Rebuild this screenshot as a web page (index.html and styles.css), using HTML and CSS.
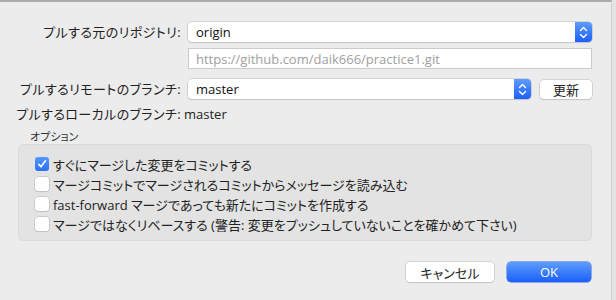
FILE: index.html
```html
<!DOCTYPE html>
<html lang="ja">
<head>
    <meta charset="UTF-8">
    <title>プル</title>
    <link rel="stylesheet" href="styles.css">
</head>
<body>

<div class="sheet">
    <div class="form">
        <label class="form-label">プルする元のリポジトリ:</label>
        <div class="popup">
            <span class="popup-text">origin</span>
            <span class="stepper">
                <svg width="9" height="13" viewBox="0 0 9 13"><path d="M1.5 4.5 L4.5 1.5 L7.5 4.5 M1.5 8.5 L4.5 11.5 L7.5 8.5" fill="none" stroke="#fff" stroke-width="1.4" stroke-linecap="round" stroke-linejoin="round"/></svg>
            </span>
        </div>

        <span></span>
        <input class="text-field" type="text" placeholder="https://github.com/daik666/practice1.git">

        <label class="form-label row-gap">プルするリモートのブランチ:</label>
        <div class="control-row row-gap">
            <div class="popup popup-flex">
                <span class="popup-text">master</span>
                <span class="stepper">
                    <svg width="9" height="13" viewBox="0 0 9 13"><path d="M1.5 4.5 L4.5 1.5 L7.5 4.5 M1.5 8.5 L4.5 11.5 L7.5 8.5" fill="none" stroke="#fff" stroke-width="1.4" stroke-linecap="round" stroke-linejoin="round"/></svg>
                </span>
            </div>
            <button class="button button-small">更新</button>
        </div>

        <label class="form-label">プルするローカルのブランチ:</label>
        <div class="plain-value">master</div>
    </div>

    <div class="group-title">オプション</div>
    <div class="group-box">
        <label class="check-row">
            <span class="check checked">
                <svg width="10" height="10" viewBox="0 0 10 10"><path d="M1.8 5.4 L4 7.8 L8.4 1.8" fill="none" stroke="#fff" stroke-width="1.6" stroke-linecap="round" stroke-linejoin="round"/></svg>
            </span>
            すぐにマージした変更をコミットする
        </label>
        <label class="check-row">
            <span class="check"></span>
            マージコミットでマージされるコミットからメッセージを読み込む
        </label>
        <label class="check-row">
            <span class="check"></span>
            fast-forward マージであっても新たにコミットを作成する
        </label>
        <label class="check-row">
            <span class="check"></span>
            マージではなくリベースする (警告: 変更をプッシュしていないことを確かめて下さい)
        </label>
    </div>

    <div class="actions">
        <button class="button button-cancel">キャンセル</button>
        <button class="button button-ok">OK</button>
    </div>
</div>

</body>
</html>
```

FILE: styles.css
```css
* {
    margin: 0;
    padding: 0;
    box-sizing: border-box;
    font-family: "Open Sans", "Noto Sans CJK JP", sans-serif;
    font-feature-settings: "palt";
}
body {
    width: 616px;
    height: 300px;
    background-color: #e4e4e4;
    overflow: hidden;
    color: #222;
    font-size: 13px;
}
.sheet {
    width: 612px;
    height: 300px;
    background-color: #ececec;
    border-top: 2px solid #acacac;
    border-right: 1px solid #cfcfcf;
    padding-top: 20px;
}
.form {
    display: grid;
    grid-template-columns: 181px 404px;
    column-gap: 7px;
    row-gap: 6px;
    align-items: center;
}
.form-label {
    text-align: right;
    color: #222;
    line-height: 16px;
    letter-spacing: 0.4px;
}
.row-gap {
    margin-top: 4px;
}
.popup {
    height: 20px;
    background-color: #fff;
    border-radius: 4px;
    box-shadow: 0 0 0 0.5px #b9b9b9, 0 1px 1px rgba(0, 0, 0, 0.12);
    display: flex;
    align-items: center;
    justify-content: space-between;
}
.popup-text {
    padding-left: 8px;
    color: #111;
}
.stepper {
    width: 17px;
    height: 20px;
    border-radius: 0 4px 4px 0;
    background: linear-gradient(#5d9cfd, #1d5ffb);
    display: flex;
    align-items: center;
    justify-content: center;
}
.text-field {
    height: 21px;
    border: 1px solid #cbcbcb;
    background-color: #fff;
    padding-left: 7px;
    font-size: 13px;
    outline: none;
}
.text-field::placeholder {
    color: #a0a0a0;
}
.control-row {
    display: flex;
    align-items: center;
    gap: 9px;
}
.popup-flex {
    flex: 1;
}
.plain-value {
    margin-left: -7px;
    padding-left: 3px;
    line-height: 16px;
    margin-top: 1px;
}
.button {
    height: 20px;
    background-color: #fff;
    border: none;
    border-radius: 4px;
    box-shadow: 0 0 0 0.5px #b9b9b9, 0 1px 1px rgba(0, 0, 0, 0.12);
    font-size: 13px;
    color: #222;
}
.button-small {
    width: 52px;
    height: 19px;
}
.group-title {
    font-size: 11px;
    color: #333;
    margin: 8px 0 0 30px;
    line-height: 14px;
}
.group-box {
    margin: 0 0 0 18px;
    width: 574px;
    height: 97px;
    background-color: #e3e3e3;
    border: 1px solid #dadada;
    border-radius: 5px;
    padding: 12px 0 0 16px;
    display: flex;
    flex-direction: column;
    gap: 6px;
}
.check-row {
    display: flex;
    align-items: center;
    gap: 4px;
    height: 14px;
    color: #222;
}
.check {
    width: 14px;
    height: 14px;
    background-color: #fff;
    border-radius: 3px;
    box-shadow: 0 0 0 0.5px #b5b5b5, 0 1px 1px rgba(0, 0, 0, 0.1);
    display: flex;
    align-items: center;
    justify-content: center;
}
.check.checked {
    background: linear-gradient(#5398fc, #2b70f8);
    box-shadow: none;
}
.actions {
    display: flex;
    justify-content: flex-end;
    gap: 13px;
    padding-right: 20px;
    margin-top: 21px;
}
.button-cancel {
    width: 88px;
}
.button-ok {
    width: 84px;
    background: linear-gradient(#5e9dfd, #1b5ffb);
    color: #fff;
    box-shadow: 0 0 0 0.5px #2d63e0;
}
```
